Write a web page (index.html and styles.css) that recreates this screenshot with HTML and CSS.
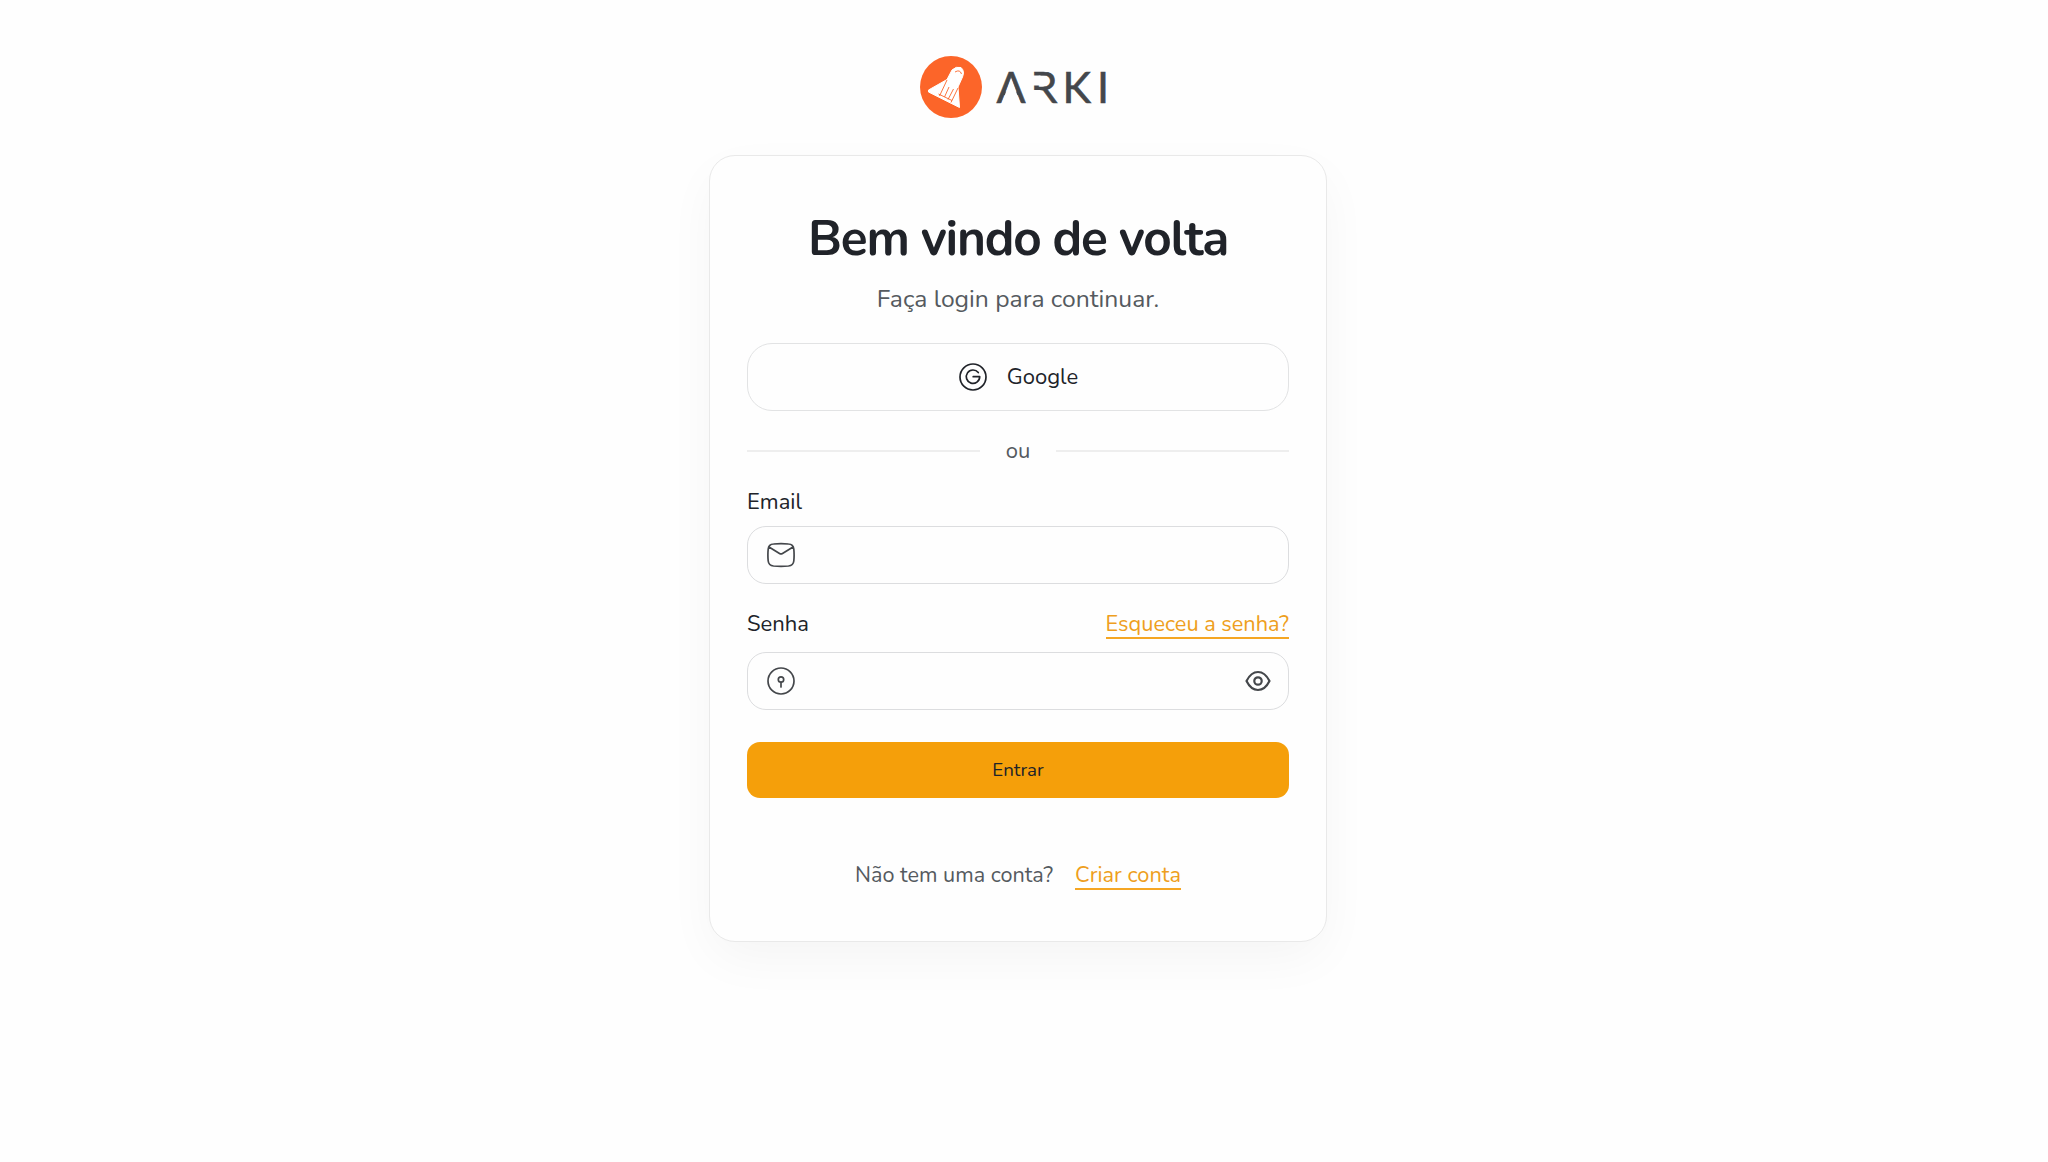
FILE: index.html
```html
<!DOCTYPE html>
<html lang="pt-BR">
<head>
    <meta charset="UTF-8">
    <meta name="viewport" content="width=device-width, initial-scale=1.0">
    <title>Arki - Login</title>
    <link rel="stylesheet" href="styles.css">
</head>
<body>
    <main class="page">
        <svg class="logo" viewBox="0 0 190 64" role="img" aria-label="Arki">
            <circle cx="32" cy="32" r="31" fill="#fc6529"/>
            <path d="M9.500 35 L28 24.500 L33 15 Q37 11 42 12.500 Q46 16 43.500 22 L39 32 L40.500 52.500 L9.500 37 Z" fill="#fff" stroke="#fff" stroke-width="1" stroke-linejoin="round"/>
            <path d="M28 25 L20.500 41 M39 33 L32 47.500 M19.500 39 L33 45.500 M30 32 L25.500 42 M34.500 34 L29 44.500 M36 17 Q41 14 42.500 19" fill="none" stroke="#fc6529" stroke-width="0.900"/>
            <text class="logo-text" x="77.5 111.5 143.5 178" y="47.5">ARKI</text>
            <!-- stencil cuts of the wordmark -->
            <path d="M92.100 23.500 L101.600 48.500 H82.600 Z" fill="#fefefe"/>
            <path d="M112 20.500 H121.500 V30.500 H112 Z M112 35 H121.500 V49 H112 Z" fill="#fefefe"/>
        </svg>

        <section class="card">
            <h1>Bem vindo de volta</h1>
            <p class="subtitle">Faça login para continuar.</p>

            <button class="google" type="button">
                <svg class="icon" viewBox="0 0 28 28">
                    <circle cx="14" cy="14" r="13"/>
                    <path d="M19.300 9.600 A6.700 6.700 0 1 0 20.700 13.700 H14.200"/>
                </svg>
                <span>Google</span>
            </button>

            <div class="divider"><span>ou</span></div>

            <form>
                <div class="label-row">
                    <label for="email">Email</label>
                </div>
                <div class="field">
                    <svg class="icon" viewBox="0 0 28 28">
                        <path d="M6.500 3 Q14 2.200 21.500 3 Q26.300 3.200 26.800 8 Q27.400 14 26.800 20 Q26.300 24.500 21.500 25 Q14 25.600 6.500 25 Q1.700 24.500 1.200 20 Q.6 14 1.200 8 Q1.700 3.200 6.500 3 Z M2 6 L12.500 12.500 Q14 13.400 15.500 12.500 L26 6"/>
                    </svg>
                    <input id="email" type="email">
                </div>

                <div class="label-row password-label">
                    <label for="password">Senha</label>
                    <a class="forgot" href="#">Esqueceu a senha?</a>
                </div>
                <div class="field">
                    <svg class="icon" viewBox="0 0 28 28">
                        <circle cx="14" cy="14" r="13"/>
                        <circle cx="14" cy="12.500" r="2.700"/>
                        <path d="M14 15.200 V20"/>
                    </svg>
                    <input id="password" type="password">
                    <svg class="icon eye" viewBox="0 0 26 22">
                        <path d="M1.500 11 Q6 2 13 2 Q20 2 24.500 11 Q20 20 13 20 Q6 20 1.500 11 Z"/>
                        <circle cx="13" cy="11" r="3.700"/>
                    </svg>
                </div>

                <button class="submit" type="submit">Entrar</button>
            </form>

            <p class="signup"><span>Não tem uma conta?</span> <a href="#">Criar conta</a></p>
        </section>
    </main>
</body>
</html>
```
FILE: styles.css
```css
* {
    box-sizing: border-box;
}

body {
    margin: 0;
    min-height: 100vh;
    background-color: #fefefe;
    color: #202329;
    font-family: Nunito, Lato, sans-serif;
    font-size: 22px;
}

.page {
    display: flex;
    flex-direction: column;
    align-items: center;
    padding: 55px 12px 0 0;
}

.logo {
    width: 190px;
    height: 64px;
    margin: 0 8px 36px 0;
}

.logo-text {
    font-family: Lato, sans-serif;
    font-size: 43px;
    fill: #44474b;
    stroke: #44474b;
    stroke-width: 0.6;
}

.card {
    width: 618px;
    height: 787px;
    padding: 51px 37px 0;
    border: 1px solid #e9e9e9;
    border-radius: 26px;
    background-color: #fefefe;
    box-shadow: 0 18px 52px -4px rgba(0, 0, 0, 0.045);
}

h1 {
    margin: 0;
    line-height: 64px;
    font-size: 49.5px;
    font-weight: 700;
    letter-spacing: -0.025em;
    text-align: center;
}

.subtitle {
    margin: 11px 0 0;
    line-height: 34px;
    font-size: 24.7px;
    color: #555a5f;
    text-align: center;
}

button {
    display: flex;
    align-items: center;
    justify-content: center;
    width: 100%;
    padding: 0;
    color: #202329;
    font-family: inherit;
    cursor: pointer;
}

.google {
    gap: 20px;
    height: 68px;
    margin-top: 27px;
    padding-left: 1px;
    border: 1px solid #e2e3e4;
    border-radius: 25px;
    background-color: transparent;
    font-size: 22px;
}

.icon {
    flex: none;
    width: 28px;
    height: 28px;
    fill: none;
    stroke: #44474b;
    stroke-width: 1.7;
    stroke-linecap: round;
    stroke-linejoin: round;
}

.google .icon {
    stroke: #202329;
}

.divider {
    display: flex;
    align-items: center;
    gap: 26px;
    height: 30px;
    margin-top: 25px;
    color: #555a5f;
}

.divider::before,
.divider::after {
    content: "";
    flex: 1;
    height: 2px;
    background-color: #eeeeee;
}

.label-row {
    display: flex;
    justify-content: space-between;
    height: 30px;
    margin: 21px 0 9px;
    line-height: 31px;
}

.password-label {
    margin: 25px 0 13px;
}

.field {
    display: flex;
    align-items: center;
    height: 58px;
    padding: 0 17px 0 19px;
    border: 1px solid #dcdddf;
    border-radius: 19px;
}

.field input {
    flex: 1;
    min-width: 0;
    height: 100%;
    padding: 0 14px;
    border: 0;
    outline: 0;
    background: transparent;
    font: inherit;
}

.icon.eye {
    width: 26px;
    height: 22px;
    stroke-width: 2.2;
}

a {
    height: 30px;
    border-bottom: 2px solid #f5a623;
    color: #ee9e20;
    font-size: 21.75px;
    text-decoration: none;
}

.submit {
    height: 56px;
    margin-top: 32px;
    border: 0;
    border-radius: 13px;
    background-color: #f59f0a;
    font-size: 18.8px;
}

.signup {
    display: flex;
    justify-content: center;
    gap: 22px;
    margin: 62px 0 0;
    line-height: 30px;
    font-size: 21.6px;
    color: #555a5f;
}
```
